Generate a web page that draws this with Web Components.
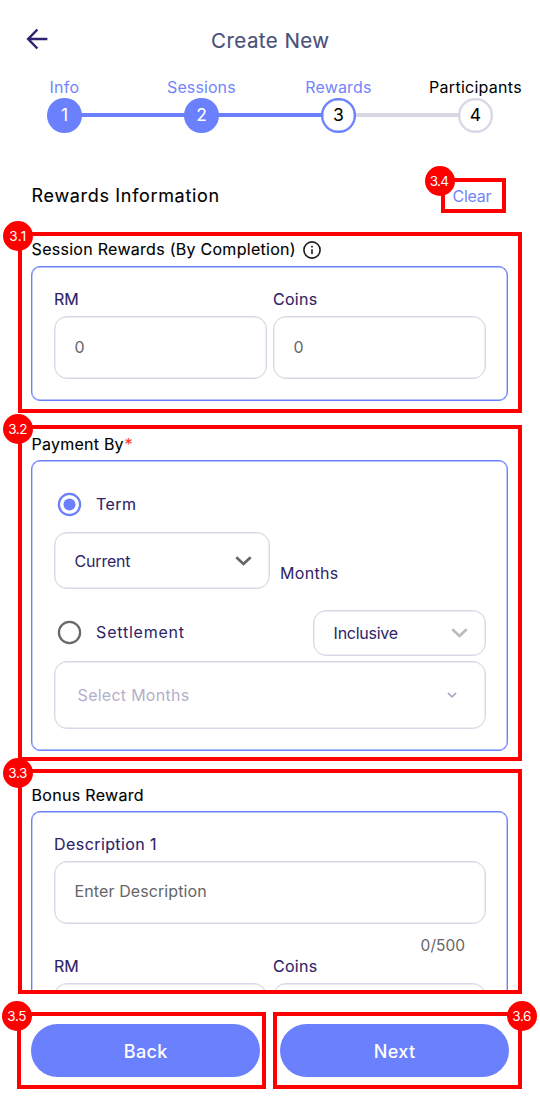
<!DOCTYPE html>
<html lang="en">
<head>
<meta charset="utf-8">
<title>Create New</title>
<style>
html,body{margin:0;background:#fff}
body{font-family:Inter,"Liberation Sans",sans-serif;font-size:16px;width:540px;height:1100px;overflow:hidden}
</style>
</head>
<body>
<reward-page></reward-page>
<script>
// Single-line text whose tracking is adjusted so that it fills a given width.
class UiText extends HTMLElement{
  connectedCallback(){
    const root=this.attachShadow({mode:'open'});
    root.innerHTML=`<style>:host{display:block;flex:none;white-space:nowrap;line-height:20px}span{display:inline-block;margin-left:.6px}</style><span><slot></slot></span>`;
    const fit=parseFloat(this.getAttribute('fit'));
    if(fit){
      const span=root.querySelector('span');
      const n=this.textContent.length;
      const s=(fit-1.5-span.getBoundingClientRect().width)/Math.max(1,n-1);
      span.style.letterSpacing=s.toFixed(3)+'px';
      this.style.width=fit+'px';
    }
  }
}
// Red numbered outline around a region.
class NoteFrame extends HTMLElement{
  connectedCallback(){
    this.attachShadow({mode:'open'}).innerHTML=`<style>
    :host{display:block;box-sizing:border-box;position:relative;border:4px solid #f00}
    .clip{height:100%;overflow:hidden}
    .badge{position:absolute;left:var(--bx,-19px);top:var(--by,-15px);width:30px;height:30px;border-radius:50%;background:#f00;color:#fff;font:400 13.5px/30px Inter,sans-serif;display:flex;justify-content:center;z-index:2}
    ui-text{line-height:30px}
    </style><div class="clip"><slot></slot></div><div class="badge"><ui-text fit="${this.getAttribute('tw')||20.7}">${this.getAttribute('label')}</ui-text></div>`;
  }
}
class BlueCard extends HTMLElement{
  connectedCallback(){
    this.attachShadow({mode:'open'}).innerHTML=`<style>
    :host{display:block;box-sizing:border-box;width:477px;margin-left:9px;padding:0 21.5px;border:1px solid #6b80fc;border-radius:9px;box-shadow:inset 0 0 0 .4px #6b80fc}
    </style><slot></slot>`;
  }
}
class FieldBox extends HTMLElement{
  connectedCallback(){
    this.attachShadow({mode:'open'}).innerHTML=`<style>
    :host{display:flex;align-items:center;justify-content:space-between;box-sizing:border-box;flex:none;border:1px solid #d9d7e5;border-radius:13px;padding:0 17px 0 19.5px;color:#666;box-shadow:inset 0 0 0 .4px #d9d7e5}
    </style><slot></slot>`;
  }
}
class ChevronIcon extends HTMLElement{
  connectedCallback(){
    const small=this.hasAttribute('small');
    this.attachShadow({mode:'open'}).innerHTML=`<style>:host{display:block;flex:none}svg{display:block}</style>`+
    (small?`<svg width="10" height="8" fill="none" stroke="currentColor" stroke-width="1.5"><path d="M.9 1.9 5 5.9 9.1 1.9"/></svg>`
          :`<svg width="17" height="12" fill="none" stroke="currentColor" stroke-width="2.7"><path d="M1.3 2.3 8.5 9 15.7 2.3"/></svg>`);
  }
}
class RadioDot extends HTMLElement{
  connectedCallback(){
    const on=this.hasAttribute('on');
    this.attachShadow({mode:'open'}).innerHTML=`<style>:host{display:block;flex:none;color:${on?'#6b80fc':'#696969'}}svg{display:block}</style>
    <svg width="25" height="25"><circle cx="12.5" cy="12.5" r="10.6" fill="none" stroke="currentColor" stroke-width="2.3"/>${on?'<circle cx="12.5" cy="12.5" r="6" fill="currentColor"/>':''}</svg>`;
  }
}
class StepItem extends HTMLElement{
  connectedCallback(){
    const st=this.getAttribute('state');
    this.attachShadow({mode:'open'}).innerHTML=`<style>
    :host{display:flex;flex-direction:column;align-items:center;width:137px;flex:none;position:relative;color:${st==='todo'?'#000':'#7385fb'}}
    ui-text{line-height:20px}
    .row{display:flex;align-items:center;width:137px;margin-top:1px}
    i{height:4px;flex:1;background:var(--l)}
    i+b+i{background:var(--r)}
    b{box-sizing:border-box;flex:none;width:34.5px;height:34.5px;border-radius:50%;font:400 17.5px/36px Inter,sans-serif;display:flex;align-items:center;justify-content:center;margin:0 -1px;z-index:1;
      ${st==='done'?'background:#6b80fc;color:#fff':st==='now'?'background:#fff;border:2px solid #6b80fc;box-shadow:inset 0 0 0 .4px #6b80fc;color:#000':'background:#fff;border:2px solid #d9d7e5;box-shadow:inset 0 0 0 .4px #d9d7e5;color:#000'}}
    </style><ui-text fit="${this.getAttribute('fit')}">${this.getAttribute('label')}</ui-text>
    <div class="row"><i></i><b>${this.getAttribute('n')}</b><i></i></div>`;
  }
}
class PillButton extends HTMLElement{
  connectedCallback(){
    this.attachShadow({mode:'open'}).innerHTML=`<style>
    :host{display:flex;align-items:center;justify-content:center;box-sizing:border-box;padding-top:2px;width:228.5px;height:53px;border-radius:27px;background:#6b80fc;color:#fff;font-size:18px;font-weight:500}
    </style><slot></slot>`;
  }
}
class RewardPage extends HTMLElement{
  connectedCallback(){
    this.attachShadow({mode:'open'}).innerHTML=`<style>
    :host{display:block;width:540px;height:1100px;overflow:hidden;color:#000}
    header{display:flex;align-items:center;height:77px;padding-left:26px;box-sizing:border-box}
    header svg{flex:none}
    header ui-text{margin-left:162.5px;margin-top:4px;font-size:20.5px;line-height:26px;font-weight:400;color:#4a5078;-webkit-text-stroke:.15px #4a5078}
    nav{display:flex;width:548px;margin-left:-4px}
    .head{display:flex;height:99px;align-items:flex-start;padding-left:31px;box-sizing:border-box}
    .head>ui-text{font-size:18px;margin-top:53px}
    .head>note-frame{width:65px;height:35px;margin:45.5px 0 0 220.5px;--bx:-20px;--by:-16px}
    .head note-frame ui-text{color:#7385fb;margin:3.5px 0 0 7.5px}
    .m{-webkit-text-stroke:.12px currentColor}
    .sec{width:504px;margin-left:18px}
    .title{display:flex;align-items:center;padding-left:9px}
    .navy{color:#2e2367}
    .pair{display:grid;grid-template-columns:213.5px 213.5px;column-gap:5.5px}
    .row{display:flex;align-items:center}
    .up{margin-top:-2px}
    .btns{display:flex;gap:7px;margin:18px 0 0 17px}
    .btns note-frame{width:249px;height:77px}
    </style>
    <header>
      <svg width="22" height="24" fill="none" stroke="#2e2272" stroke-width="2.5"><path d="M11.4 2.5 2.2 12 11.4 21.5M2.2 12H21.4"/></svg>
      <ui-text fit="119.5">Create New</ui-text>
    </header>
    <nav>
      <step-item state="done" n="1" label="Info" fit="31" style="--l:transparent;--r:#6b80fc"></step-item>
      <step-item state="done" n="2" label="Sessions" fit="70" style="--l:#6b80fc;--r:#6b80fc"></step-item>
      <step-item state="now" n="3" label="Rewards" fit="67.5" style="--l:#6b80fc;--r:#d9d7e5"></step-item>
      <step-item state="todo" n="4" label="Participants" fit="94" style="--l:#d9d7e5;--r:transparent"></step-item>
    </nav>
    <div class="head">
      <ui-text class="m" fit="189">Rewards Information</ui-text>
      <note-frame label="3.4"><ui-text fit="40.5">Clear</ui-text></note-frame>
    </div>
    <note-frame class="sec" label="3.1" tw="18.5" style="height:181px;margin-top:.5px">
      <div class="title m" style="height:28px;padding-bottom:2px;box-sizing:border-box"><ui-text fit="265.5">Session Rewards (By Completion)</ui-text>
        <svg width="20" height="20" style="margin:1px 0 0 5.5px" fill="none" stroke="#1c1b1f" stroke-width="1.6"><circle cx="10" cy="10" r="8.1"/><path d="M10 9.2V14M10 5.8V7.6"/></svg></div>
      <blue-card style="height:135px;margin-top:2px">
        <div class="pair navy m" style="padding-top:22px"><ui-text fit="26">RM</ui-text><ui-text fit="45.5">Coins</ui-text></div>
        <div class="pair" style="margin-top:7px"><field-box style="height:63px"><ui-text class="up">0</ui-text></field-box><field-box style="height:63px"><ui-text class="up">0</ui-text></field-box></div>
      </blue-card>
    </note-frame>
    <note-frame class="sec" label="3.2" style="height:336px;margin-top:12px">
      <div class="title m" style="height:31px;padding-bottom:2px;box-sizing:border-box"><ui-text fit="93.5">Payment By</ui-text><ui-text style="color:#fb3b30;margin-left:-.5px">*</ui-text></div>
      <blue-card style="height:291px">
        <div class="row navy" style="margin:31px 0 0 3px"><radio-dot on></radio-dot><ui-text fit="41.5" style="margin:-1px 0 0 14px" class="m">Term</ui-text></div>
        <div class="row navy" style="margin-top:15px"><field-box style="width:216px;height:57px"><ui-text fit="57.5" style="color:#2e2367">Current</ui-text><chevron-icon></chevron-icon></field-box><ui-text fit="59.5" style="margin:24px 0 0 10px">Months</ui-text></div>
        <div class="row navy" style="margin-top:21px"><radio-dot style="margin:-1px 0 0 3px"></radio-dot><ui-text fit="89.5" style="margin:-2px 0 0 14px">Settlement</ui-text><field-box style="width:173px;height:46px;margin-left:127.5px"><ui-text fit="66" style="color:#2e2367">Inclusive</ui-text><chevron-icon style="color:#bbb"></chevron-icon></field-box></div>
        <field-box style="width:432.5px;height:68px;margin-top:5px;padding:0 28px 0 22.5px;color:#b3afcb"><ui-text fit="113">Select Months</ui-text><chevron-icon small style="color:#a8a3c8"></chevron-icon></field-box>
      </blue-card>
    </note-frame>
    <note-frame class="sec" label="3.3" style="height:225px;margin-top:8px">
      <div class="title m" style="height:38px;padding-top:5px;box-sizing:border-box"><ui-text fit="113.5">Bonus Reward</ui-text></div>
      <blue-card style="height:240px">
        <ui-text class="navy m" fit="104" style="margin-top:22px">Description 1</ui-text>
        <field-box style="width:432.5px;height:63px;margin-top:6.5px"><ui-text class="up" fit="133.5">Enter Description</ui-text></field-box>
        <ui-text fit="46" style="margin:12px 0 0 366.5px;color:#666;font-size:15.5px">0/500</ui-text>
        <div class="pair navy m" style="margin-top:.5px"><ui-text fit="26">RM</ui-text><ui-text fit="45.5">Coins</ui-text></div>
        <div class="pair" style="margin-top:7px"><field-box style="height:63px"></field-box><field-box style="height:63px"></field-box></div>
      </blue-card>
    </note-frame>
    <div class="btns">
      <note-frame label="3.5"><pill-button style="margin:8px 0 0 10.4px"><ui-text fit="45">Back</ui-text></pill-button></note-frame>
      <note-frame label="3.6" style="--bx:230px"><pill-button style="margin:8px 0 0 3.4px"><ui-text fit="43">Next</ui-text></pill-button></note-frame>
    </div>`;
  }
}
customElements.define('ui-text',UiText);
customElements.define('note-frame',NoteFrame);
customElements.define('blue-card',BlueCard);
customElements.define('field-box',FieldBox);
customElements.define('chevron-icon',ChevronIcon);
customElements.define('radio-dot',RadioDot);
customElements.define('step-item',StepItem);
customElements.define('pill-button',PillButton);
customElements.define('reward-page',RewardPage);
</script>
</body>
</html>
